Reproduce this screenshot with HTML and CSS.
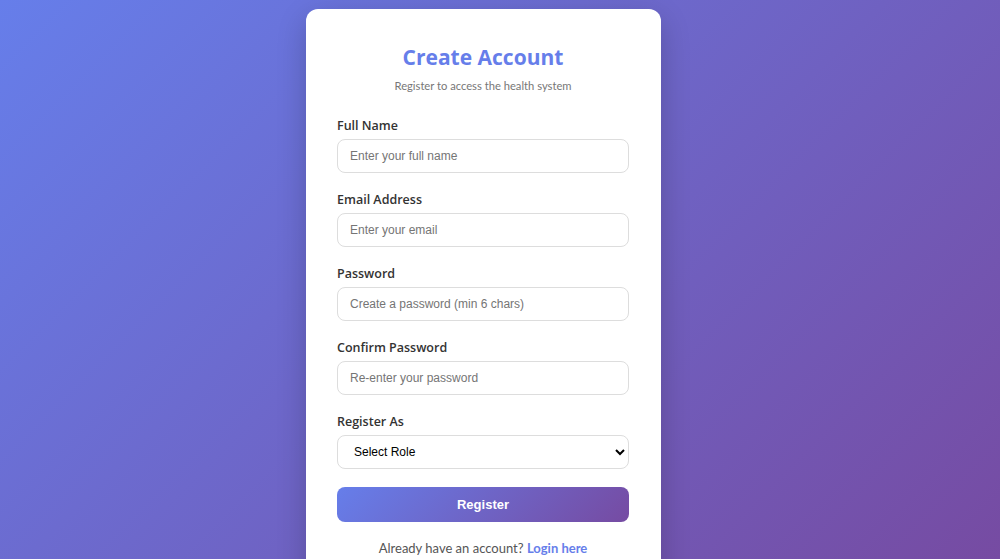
FILE: index.html
```html
<!DOCTYPE html>
<html lang="en">
<head>
<meta charset="utf-8">
<title>Create Account</title>
<link rel="stylesheet" href="styles.css">
</head>
<body>
<div class="page">
  <div class="card">
    <h2 class="title">Create Account</h2>
    <p class="subtitle">Register to access the health system</p>
    <form class="form">
      <div class="group">
        <label class="label">Full Name</label>
        <input class="field" type="text" placeholder="Enter your full name">
      </div>
      <div class="group">
        <label class="label">Email Address</label>
        <input class="field" type="email" placeholder="Enter your email">
      </div>
      <div class="group">
        <label class="label">Password</label>
        <input class="field" type="password" placeholder="Create a password (min 6 chars)">
      </div>
      <div class="group">
        <label class="label">Confirm Password</label>
        <input class="field" type="password" placeholder="Re-enter your password">
      </div>
      <div class="group">
        <label class="label">Register As</label>
        <select class="field select">
          <option>Select Role</option>
        </select>
      </div>
      <button class="btn" type="button">Register</button>
    </form>
    <p class="footer">Already have an account? <a class="link" href="#">Login here</a></p>
  </div>
</div>
</body>
</html>
```

FILE: styles.css
```css
html, body {
  margin: 0;
  padding: 0;
}
body {
  font-family: "Open Sans", "Noto Sans", sans-serif;
  background: linear-gradient(135deg, #667eea 0%, #764ba2 100%);
  min-height: 100vh;
  overflow: hidden;
}
.page {
  display: flex;
  justify-content: center;
  align-items: flex-start;
  padding: 9px 33px 0 0;
  height: 550px;
}
.card {
  box-sizing: border-box;
  width: 355px;
  background: #fff;
  border-radius: 12px;
  padding: 34px 32px 30px 31px;
  box-shadow: 0 10px 30px rgba(0, 0, 0, 0.2);
}
.title {
  margin: 0;
  text-align: center;
  color: #667eea;
  font-size: 21px;
  font-weight: 700;
  line-height: 28px;
}
.subtitle {
  margin: 7px 0 23px;
  text-align: center;
  color: #777;
  font-family: Lato, "Open Sans", sans-serif;
  font-size: 11.2px;
  line-height: 16px;
}
.form {
  display: flex;
  flex-direction: column;
}
.group {
  display: flex;
  flex-direction: column;
  gap: 5px;
  margin-bottom: 18px;
}
.label {
  font-size: 12.5px;
  font-weight: 600;
  color: #333;
  line-height: 17px;
}
.field {
  box-sizing: border-box;
  height: 34px;
  width: 100%;
  border: 1px solid #ddd;
  border-radius: 8px;
  padding: 0 12px;
  font-family: "Liberation Sans", Arial, sans-serif;
  font-size: 12px;
  color: #333;
  background: #fff;
  outline: none;
}
.field::placeholder {
  color: #757575;
}
.select {
  padding-left: 12px;
  color: #000;
}
.btn {
  height: 35px;
  border: none;
  border-radius: 8px;
  background: linear-gradient(135deg, #667eea 0%, #764ba2 100%);
  color: #fff;
  font-family: "Liberation Sans", Arial, sans-serif;
  font-size: 13px;
  font-weight: 700;
  cursor: pointer;
}
.footer {
  margin: 18px 0 0;
  text-align: center;
  font-family: Lato, "Open Sans", sans-serif;
  font-size: 13px;
  color: #555;
}
.link {
  color: #667eea;
  font-weight: 700;
  text-decoration: none;
}
```
